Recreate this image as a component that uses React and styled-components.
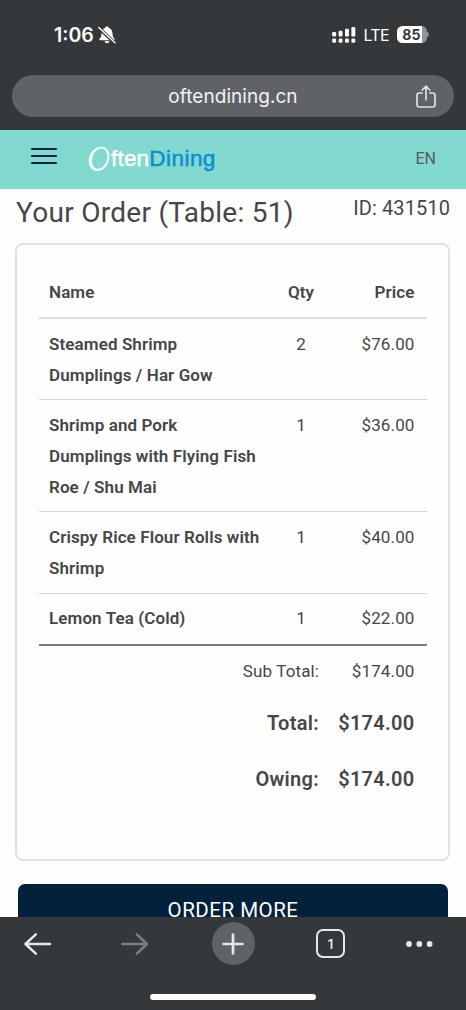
import React from 'react';
import styled, { createGlobalStyle } from 'styled-components';

const Global = createGlobalStyle`
  * { box-sizing: border-box; }
  body { margin: 0; background: #fefefe; font-family: Roboto, "Liberation Sans", sans-serif; color: #464646; }
`;

const Screen = styled.div`
  width: 466px;
  height: 1010px;
  display: flex;
  flex-direction: column;
  overflow: hidden;
  background: #fefefe;
`;

const BrowserTop = styled.header`
  height: 130px;
  flex: none;
  background: #35383b;
  display: flex;
  flex-direction: column;
  padding: 21px 12px 0;
`;

const StatusBar = styled.div`
  height: 28px;
  margin: 0 25px 26px 42px;
  display: flex;
  align-items: center;
  color: #fff;
  font-family: Inter, sans-serif;
`;

const Clock = styled.span`
  font-size: 19.5px;
  font-weight: 600;
  width: 44px;
  white-space: nowrap;
`;

const StatusRight = styled.div`
  margin-left: auto;
  display: flex;
  align-items: center;
  padding-bottom: 1px;
`;

const Network = styled.span`
  font-size: 16px;
  letter-spacing: -0.7px;
  width: 24px;
  margin: 0 9px 0 8px;
  white-space: nowrap;
`;

const Battery = styled.div`
  width: 30px;
  height: 17px;
  border-radius: 5.5px;
  background: linear-gradient(90deg, #fff 85%, #929597 85%);
  color: #35383b;
  font-size: 14px;
  font-weight: 700;
  line-height: 17px;
  text-align: center;
  letter-spacing: 0.3px;
`;

const BatteryTip = styled.i`
  width: 2px;
  height: 5px;
  margin-left: 0.5px;
  border-radius: 0 2px 2px 0;
  background: #85888a;
`;

const AddressBar = styled.div`
  height: 42px;
  border-radius: 21px;
  background: #5f6367;
  display: grid;
  grid-template-columns: 56px 1fr 56px;
  align-items: center;
  justify-items: center;
  color: #f1f3f5;
  font-family: Inter, sans-serif;
  font-size: 19px;
  letter-spacing: 0.05px;
  svg { margin-top: 1px; }
`;

const SiteHeader = styled.div`
  height: 59px;
  flex: none;
  background: #82d9cf;
  display: flex;
  align-items: center;
  padding: 0 30px;
`;

const MenuButton = styled.button`
  width: 28px;
  height: 18px;
  margin: 0 30px 7px 0;
  padding: 0;
  border: 0;
  background: none;
  display: flex;
`;

const Logo = styled.div`
  display: flex;
  align-items: center;
  padding-bottom: 2px;
  font-family: "Liberation Sans", Arial, sans-serif;
  font-size: 22.5px;
  line-height: 26px;
  letter-spacing: 0.2px;
  color: #fff;
  -webkit-text-stroke: 0.5px currentColor;
  svg { margin-right: 1px; }
`;

const LogoAccent = styled.span`
  color: #0b8fcf;
  letter-spacing: 0.45px;
`;

const Language = styled.span`
  margin-left: auto;
  font-size: 16px;
  color: #50605d;
  padding-bottom: 2px;
`;

const Page = styled.main`
  flex: 1;
  min-height: 0;
  overflow: hidden;
  padding: 0 16px 0 15px;
  display: flex;
  flex-direction: column;
`;

const TitleRow = styled.div`
  height: 54px;
  flex: none;
  display: flex;
  justify-content: space-between;
  padding: 0 0 0 1px;
  white-space: nowrap;
`;

const Title = styled.h1`
  margin: 0;
  font-size: 28px;
  font-weight: 400;
  line-height: 48px;
  letter-spacing: 0.28px;
`;

const OrderId = styled.span`
  font-size: 20px;
  line-height: 38px;
  letter-spacing: 0.1px;
`;

const Card = styled.section`
  height: 618px;
  flex: none;
  border: 2px solid #e0e0e0;
  border-radius: 8px;
  padding: 23px 21px 0 22px;
`;

const Row = styled.div`
  display: grid;
  grid-template-columns: 234px 56px 98px;
  padding: ${p => p.$pad || '9.5px 0'};
  height: ${p => p.$h}px;
  border-bottom: ${p => p.$line || '1px solid #d4d4d4'};
  font-size: 17px;
  line-height: 31px;
`;

const Cell = styled.span`
  padding: ${p => (p.$align === 'right' ? '0 12.5px 0 0' : p.$align === 'center' ? '0' : '0 10px')};
  text-align: ${p => p.$align || 'left'};
  font-weight: ${p => (p.$bold ? 600 : 400)};
  letter-spacing: ${p => (p.$bold ? 0.1 : 0.12)}px;
`;

const TotalRow = styled.div`
  height: ${p => p.$h}px;
  display: grid;
  grid-template-columns: 280px 108px;
  align-items: center;
  text-align: right;
  font-size: ${p => (p.$strong ? 20 : 17)}px;
  font-weight: ${p => (p.$strong ? 600 : 400)};
  letter-spacing: ${p => (p.$strong ? 0.3 : 0.12)}px;
  span:last-child { padding-right: 12.5px; }
`;

const OrderButton = styled.button`
  height: 52px;
  flex: none;
  margin: 23px 2px 0 3px;
  border: 0;
  border-radius: 7px;
  background: #04213b;
  color: #fff;
  font: 400 20.5px/52px Roboto, sans-serif;
  letter-spacing: 0.5px;
  padding: 0;
`;

const BrowserBottom = styled.footer`
  height: 93px;
  flex: none;
  background: #35383b;
  display: flex;
  flex-direction: column;
  align-items: center;
`;

const Toolbar = styled.nav`
  width: 100%;
  height: 53px;
  padding: 0 0 0 24px;
  display: grid;
  grid-template-columns: 97px 88px 107px 89px 1fr;
  align-items: center;
`;

const NewTab = styled.div`
  width: 43px;
  height: 43px;
  margin-left: 2.5px;
  border-radius: 50%;
  background: #5f6367;
  display: grid;
  place-items: center;
`;

const TabCount = styled.div`
  width: 29px;
  height: 29px;
  border: 2px solid #e4e7ea;
  border-radius: 7px;
  color: #e4e7ea;
  font: 600 13px/26px Inter, sans-serif;
  text-align: center;
`;

const HomeIndicator = styled.div`
  width: 166px;
  height: 6px;
  margin-top: 24px;
  border-radius: 3px;
  background: #fff;
`;

const BellOff = () => (
  <svg width="18" height="18" viewBox="0 0 18 18">
    <path d="M2.2 14.2c-.9 0-1.2-.9-.6-1.5 1.6-1.5 1.7-2.8 1.9-5.2C3.7 4.2 5.3 2.6 7 2.1 7.3.9 8 .4 9 .4s1.7.5 2 1.7c1.9.6 3.3 2.3 3.5 5.4.2 2.4.3 3.7 1.9 5.2.6.6.3 1.5-.6 1.5zM6.5 15.2h5c-.3 1.3-1.2 2-2.5 2s-2.2-.7-2.5-2z" fill="#fff" />
    <path d="M.3 1.5 16.8 17" stroke="#35383b" strokeWidth="3.4" />
    <path d="M.8 1.4 17 16.7" stroke="#fff" strokeWidth="1.4" strokeLinecap="round" />
  </svg>
);

const Signal = () => (
  <svg width="24" height="18" viewBox="0 0 24 18" fill="#fff">
    {[6, 4.8, 2.7, 1].map((y, i) => (
      <React.Fragment key={y}>
        <rect x={i * 6.4 + 0.2} y={y} width="3.9" height={10.6 - y} rx="1.3" />
        <rect x={i * 6.4 + 0.2} y="12.6" width="3.9" height="4.2" rx="1.3" />
      </React.Fragment>
    ))}
  </svg>
);

const Share = () => (
  <svg width="20" height="24" viewBox="0 0 20 24" fill="none" stroke="#dfe1e3" strokeWidth="1.7" strokeLinecap="round" strokeLinejoin="round">
    <path d="M6.2 8H3.4Q1 8 1 10.4v9.2Q1 22 3.4 22h13.2q2.4 0 2.4-2.4v-9.2Q19 8 16.6 8h-2.8M10 14.8V1.3M6.2 5 10 1.2 13.8 5" />
  </svg>
);

const Arrow = ({ color, flip }) => (
  <svg width="28" height="24" viewBox="0 0 28 24" fill="none" stroke={color} strokeWidth="2.5" strokeLinecap="round" strokeLinejoin="round">
    <path d={flip ? 'M1.2 12H26M15.8 2.3 26 12 15.8 21.7' : 'M26 12H1.5M11.8 2.3 1.5 12 11.8 21.7'} />
  </svg>
);

const items = [
  { name: 'Steamed Shrimp Dumplings / Har Gow', qty: 2, price: '$76.00', h: 81.4 },
  { name: 'Shrimp and Pork Dumplings with Flying Fish Roe / Shu Mai', qty: 1, price: '$36.00', h: 112 },
  { name: 'Crispy Rice Flour Rolls with Shrimp', qty: 1, price: '$40.00', h: 81.3 },
  { name: 'Lemon Tea (Cold)', qty: 1, price: '$22.00', h: 52, line: '2px solid #7c7c7c' },
];

export default function App() {
  return (
    <Screen>
      <Global />
      <BrowserTop>
        <StatusBar>
          <Clock>1:06</Clock>
          <BellOff />
          <StatusRight>
            <Signal />
            <Network>LTE</Network>
            <Battery>85</Battery>
            <BatteryTip />
          </StatusRight>
        </StatusBar>
        <AddressBar>
          <span />
          <span>oftendining.cn</span>
          <Share />
        </AddressBar>
      </BrowserTop>
      <SiteHeader>
        <MenuButton aria-label="Menu">
          <svg width="28" height="18" viewBox="0 0 28 18" stroke="#06233e" strokeWidth="2.1" strokeLinecap="round">
            <path d="M2 2H26M2 9H26M2 16H26" />
          </svg>
        </MenuButton>
        <Logo>
          <svg width="22" height="26" viewBox="0 0 22 26" stroke="none">
            <path
              fillRule="evenodd"
              fill="#fff"
              d="M13.6.8C18.6 1 21.8 5.2 21.4 11.2 20.9 18.6 15.8 25 9.4 25.1 4 25.1.5 20.8.7 14.6 1 7 7 .6 13.6.8zM13.4 2.5C8.4 2.6 4.6 7.7 4.1 13.8 3.7 19.2 6 22.8 10 22.7 14.8 22.5 19 17.1 19.4 11.2 19.7 6 17.4 2.5 13.4 2.5z"
            />
          </svg>
          <span>ften<LogoAccent>Dining</LogoAccent></span>
        </Logo>
        <Language>EN</Language>
      </SiteHeader>
      <Page>
        <TitleRow>
          <Title>Your Order (Table: 51)</Title>
          <OrderId>ID: 431510</OrderId>
        </TitleRow>
        <Card>
          <Row $h={51} $line="2px solid #dcdcdc" $pad="8.5px 0">
            <Cell $bold>Name</Cell>
            <Cell $bold $align="center">Qty</Cell>
            <Cell $bold $align="right">Price</Cell>
          </Row>
          {items.map(it => (
            <Row key={it.name} $h={it.h} $line={it.line}>
              <Cell $bold>{it.name}</Cell>
              <Cell $align="center">{it.qty}</Cell>
              <Cell $align="right">{it.price}</Cell>
            </Row>
          ))}
          <TotalRow $h={51}><span>Sub Total:</span><span>$174.00</span></TotalRow>
          <TotalRow $h={53} $strong><span>Total:</span><span>$174.00</span></TotalRow>
          <TotalRow $h={58} $strong><span>Owing:</span><span>$174.00</span></TotalRow>
        </Card>
        <OrderButton>ORDER MORE</OrderButton>
      </Page>
      <BrowserBottom>
        <Toolbar>
          <Arrow color="#e4e7ea" />
          <Arrow color="#7b7e81" flip />
          <NewTab>
            <svg width="22" height="22" viewBox="0 0 22 22" stroke="#e4e7ea" strokeWidth="2.7" strokeLinecap="round">
              <path d="M11 1.5V20.5M1.5 11H20.5" />
            </svg>
          </NewTab>
          <TabCount>1</TabCount>
          <svg width="28" height="8" viewBox="0 0 28 8" fill="#e4e7ea">
            <circle cx="4" cy="4" r="2.9" /><circle cx="14.3" cy="4" r="2.9" /><circle cx="24.6" cy="4" r="2.9" />
          </svg>
        </Toolbar>
        <HomeIndicator />
      </BrowserBottom>
    </Screen>
  );
}
